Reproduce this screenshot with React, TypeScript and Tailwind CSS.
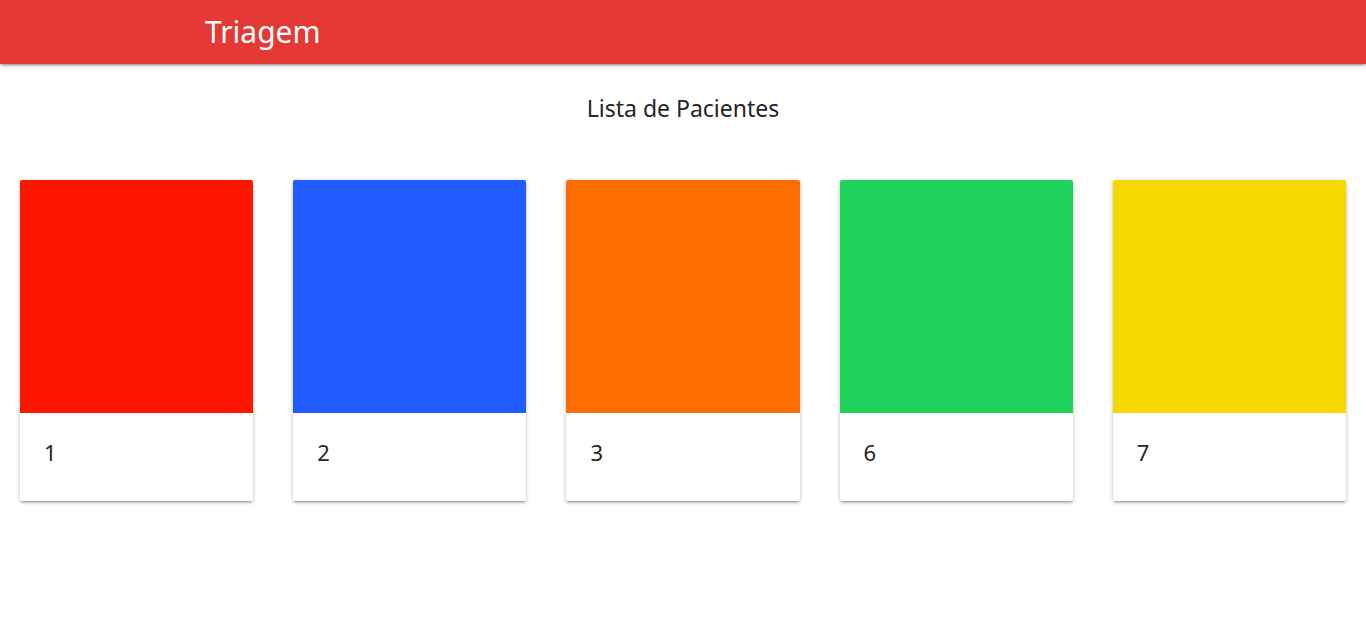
import React from "react";

const cards = [
  { n: "1", color: "bg-[#ff1600]" },
  { n: "2", color: "bg-[#1f5bff]" },
  { n: "3", color: "bg-[#ff6d00]" },
  { n: "6", color: "bg-[#20d35d]" },
  { n: "7", color: "bg-[#f4d800]" },
];

export default function App() {
  return (
    <div className="min-h-[637px] bg-white" style={{ fontFamily: '"Noto Sans", "Open Sans", sans-serif' }}>
      <nav className="h-16 bg-[#e53935] shadow-[0_2px_2px_0_rgba(0,0,0,0.14),0_3px_1px_-2px_rgba(0,0,0,0.12),0_1px_5px_0_rgba(0,0,0,0.2)] flex items-center">
        <div className="pl-[205px] text-white text-[30px] leading-none">Triagem</div>
      </nav>
      <h1 className="text-center text-[23px] text-[#262626] mt-[30px] leading-[28px]">Lista de Pacientes</h1>
      <div className="grid grid-cols-5 mt-[58px]">
        {cards.map((c) => (
          <div key={c.n} className="px-5">
            <div className="rounded-[2px] overflow-hidden bg-white shadow-[0_2px_2px_0_rgba(0,0,0,0.14),0_3px_1px_-2px_rgba(0,0,0,0.12),0_1px_5px_0_rgba(0,0,0,0.2)]">
              <div className={`aspect-square ${c.color}`} />
              <div className="h-[88px] pl-6 pt-[23px] text-[22px] leading-[32px] text-[#262626]">{c.n}</div>
            </div>
          </div>
        ))}
      </div>
    </div>
  );
}
